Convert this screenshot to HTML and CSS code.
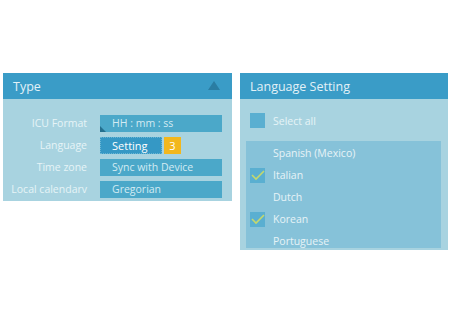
FILE: index.html
```html
<!DOCTYPE html>
<html lang="en">
  <head>
    <meta charset="UTF-8" />
    <meta name="viewport" content="width=device-width, initial-scale=1.0" />
    <title>Type and Language Setting</title>
    <link rel="stylesheet" href="styles.css">
  </head>
  <body>
    <div class="page">
      <div class="panel type-panel">
        <div class="panel-header">
          <span>Type</span>
          <span class="collapse-arrow"></span>
        </div>
        <div class="type-body">
          <label class="row-label">ICU Format</label>
          <div class="field field-corner">HH : mm : ss</div>
          <label class="row-label">Language</label>
          <div class="setting-row">
            <button class="setting-button">Setting</button>
            <span class="badge">3</span>
          </div>
          <label class="row-label">Time zone</label>
          <div class="field">Sync with Device</div>
          <label class="row-label">Local calendarv</label>
          <div class="field">Gregorian</div>
        </div>
      </div>

      <div class="panel lang-panel">
        <div class="panel-header">
          <span>Language Setting</span>
        </div>
        <div class="select-all">
          <span class="checkbox"></span>
          <span>Select all</span>
        </div>
        <ul class="lang-list">
          <li><span class="checkbox hidden"></span>Spanish (Mexico)</li>
          <li>
            <span class="checkbox">
              <svg width="15" height="15" viewBox="0 0 15 15"><polyline points="2,7 6,11 14,3" fill="none" stroke="#c4d86c" stroke-width="1.6"/></svg>
            </span>Italian
          </li>
          <li><span class="checkbox hidden"></span>Dutch</li>
          <li>
            <span class="checkbox">
              <svg width="15" height="15" viewBox="0 0 15 15"><polyline points="2,7 6,11 14,3" fill="none" stroke="#c4d86c" stroke-width="1.6"/></svg>
            </span>Korean
          </li>
          <li><span class="checkbox hidden"></span>Portuguese</li>
        </ul>
      </div>
    </div>
  </body>
</html>
```

FILE: styles.css
```css
body {
  margin: 0;
  background-color: #ffffff;
  font-family: "Open Sans", "Noto Sans", sans-serif;
}

.page {
  display: flex;
  align-items: flex-start;
  gap: 8px;
  padding: 73px 0 0 3px;
}

.panel {
  background-color: #a8d3e0;
  color: #e6f3f7;
}

.panel-header {
  display: flex;
  align-items: center;
  justify-content: space-between;
  height: 26px;
  padding: 0 12px 0 10px;
  background-color: #3a9cc7;
  font-size: 12.5px;
  color: #e2f1f7;
}

.collapse-arrow {
  width: 0;
  height: 0;
  border-left: 6px solid transparent;
  border-right: 6px solid transparent;
  border-bottom: 9px solid #2a7da3;
  margin-top: -1px;
}

.type-panel {
  width: 229px;
  height: 128px;
}

.type-body {
  display: grid;
  grid-template-columns: 84px 122px;
  column-gap: 13px;
  row-gap: 5px;
  padding-top: 16px;
  font-size: 10.5px;
}

.row-label {
  text-align: right;
  line-height: 17px;
  white-space: nowrap;
}

.field {
  position: relative;
  height: 17px;
  line-height: 17px;
  padding-left: 12px;
  background-color: #4ba8c9;
  color: #d3ebf3;
}

.field-corner::before {
  content: "";
  position: absolute;
  left: 0;
  bottom: 0;
  border-left: 6px solid #24708f;
  border-top: 6px solid transparent;
}

.setting-row {
  display: flex;
  gap: 2px;
  height: 17px;
}

.setting-button {
  width: 62px;
  height: 17px;
  padding: 0 0 0 11px;
  text-align: left;
  border: 1px dotted #6ab6d4;
  background-color: #3598c5;
  color: #ffffff;
  font-family: inherit;
  font-size: 11px;
  line-height: 15px;
}

.badge {
  width: 17px;
  height: 17px;
  line-height: 17px;
  text-align: center;
  background-color: #f2b71d;
  color: #ffffff;
  font-size: 11px;
}

.lang-panel {
  width: 208px;
  height: 177px;
}

.select-all {
  display: flex;
  align-items: center;
  gap: 8px;
  margin: 14px 0 0 10px;
  font-size: 10.5px;
}

.checkbox {
  display: inline-block;
  width: 15px;
  height: 15px;
  flex: none;
  background-color: #5aafd1;
}

.checkbox.hidden {
  visibility: hidden;
}

.checkbox svg {
  display: block;
}

.lang-list {
  list-style: none;
  margin: 13px 7px 0 6px;
  padding: 1px 0 0 4px;
  height: 106px;
  background-color: #86c2d9;
  font-size: 10.5px;
  overflow: hidden;
}

.lang-list li {
  display: flex;
  align-items: center;
  gap: 8px;
  height: 22px;
}
```
